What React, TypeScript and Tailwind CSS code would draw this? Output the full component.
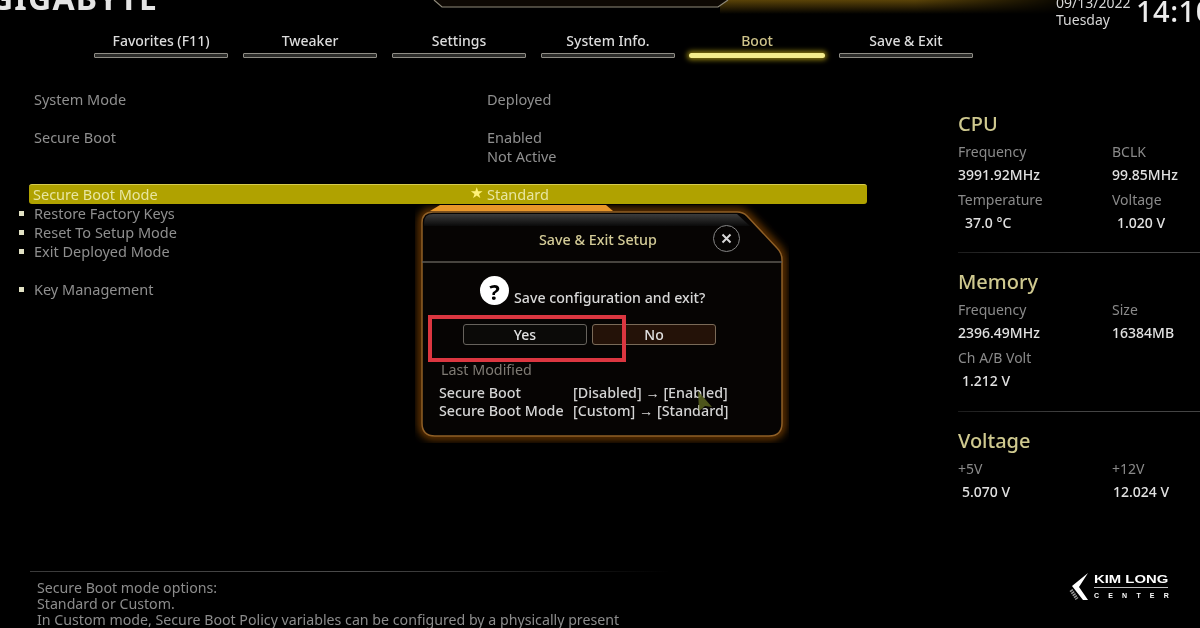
const tabs = ["Favorites (F11)", "Tweaker", "Settings", "System Info.", "Boot", "Save & Exit"];

function Tab({ label }: { label: string }) {
  const active = label === "Boot";
  return (
    <div className="flex w-[134px] flex-col items-center gap-[2px]">
      <span className={`text-[14px] leading-[20px] font-medium ${active ? "text-[#cfc48a]" : "text-[#dcdcdc]"}`}>{label}</span>
      {active ? (
        <div className="h-[5px] w-[136px] rounded-full bg-[#f3ec8c] shadow-[0_0_5px_2px_#8a7a10]" />
      ) : (
        <div className="h-[5px] w-full rounded-[1px] border border-[#8f8d86] bg-[#2c2c2a]" />
      )}
    </div>
  );
}

function Row({ label, value, bullet }: { label: string; value?: string; bullet?: boolean }) {
  return (
    <div className="flex h-[19px] items-center text-[#8f8f8f]">
      <div className="flex w-[34px] justify-start pl-[19px]">
        {bullet && <span className="h-[5px] w-[5px] bg-[#e2e2c4]" />}
      </div>
      <span className="w-[453px]">{label}</span>
      {value && <span>{value}</span>}
    </div>
  );
}

type StatData = { label: string; value: string; pad?: string };

function Stat({ label, value, pad }: StatData) {
  return (
    <div className="flex h-[48px] flex-col">
      <span className="text-[14px] leading-[20px] text-[#8a8a8a]">{label}</span>
      <span className={`mt-[3px] text-[14px] leading-[20px] font-medium text-[#e2e2e2] ${pad ?? ""}`}>{value}</span>
    </div>
  );
}

function Panel({ title, stats, height, gap }: { title: string; stats: StatData[]; height: string; gap?: string }) {
  return (
    <div className={`flex flex-col ${height}`}>
      <span className="text-[20px] leading-[26px] font-medium text-[#cfc98f]">{title}</span>
      <div className="mt-[5px] grid grid-cols-[154px_1fr]">
        {stats.map((s) => (
          <Stat key={s.label + s.value} {...s} />
        ))}
      </div>
      {gap && <div className={`h-px w-full shrink-0 bg-gradient-to-r from-[#1c1c1c] via-[#444444] to-[#444444] ${gap}`} />}
    </div>
  );
}

function Dialog() {
  const outline = "M18 7H322Q328 7 332 11L362 43Q367 48 367 55V218Q367 231 354 231H20Q7 231 7 218V18Q7 7 18 7Z";
  return (
    <div className="absolute top-[205px] left-[415px] h-[238px] w-[374px]">
      <svg className="absolute inset-0 h-full w-full" viewBox="0 0 374 238" fill="none">
        <defs>
          <filter id="glow" x="-10%" y="-10%" width="120%" height="120%">
            <feGaussianBlur stdDeviation="4" />
          </filter>
          <linearGradient id="cap" x1="0" y1="0" x2="0" y2="1">
            <stop offset="0" stopColor="#3c3c3c" />
            <stop offset="1" stopColor="#0a0a0a" />
          </linearGradient>
        </defs>
        <path d={outline} stroke="#a9590c" strokeWidth="5" filter="url(#glow)" />
        <path d="M15 6L25 0H191L198 6Z" fill="#e8962a" />
        <path d={outline} fill="#060403" stroke="#8f5f26" strokeWidth="1.5" />
        <path d="M9 18Q9 9 18 9H322L335 21H9Z" fill="url(#cap)" />
        <path d="M7 57H367" stroke="#5e5a55" strokeWidth="1.5" />
      </svg>
      <div className="relative flex h-full flex-col">
        <div className="flex h-[57px] shrink-0 items-center pt-[13px] pl-[124px]">
          <span className="w-[174px] text-[14.3px] leading-[18px] font-medium text-[#d3cb97]">Save &amp; Exit Setup</span>
          <span className="-mt-[4px] flex h-[27px] w-[27px] items-center justify-center rounded-full border-[1.5px] border-[#858585]">
            <svg width="13" height="13" viewBox="0 0 13 13" stroke="#d8d8d8" strokeWidth="2">
              <path d="M2.5 2.5L10.5 10.5M10.5 2.5L2.5 10.5" />
            </svg>
          </span>
        </div>
        <div className="mt-[15px] flex h-[35px] items-center pl-[65px]">
          <span className="mb-[8px] flex h-[29px] w-[29px] items-center justify-center rounded-full bg-white text-[22px] leading-none font-bold text-black">?</span>
          <span className="mt-[7px] ml-[5px] text-[14.2px] leading-[18px] font-medium text-[#d8d8d8]">Save configuration and exit?</span>
        </div>
        <div className="mt-[12px] flex gap-[5px] pl-[48px]">
          <button className="h-[21px] w-[124px] rounded-[3px] border border-[#66625c] bg-[#0b0a08] text-[14px] leading-[19px] font-medium text-[#e2e2e2]">Yes</button>
          <button className="h-[21px] w-[124px] rounded-[3px] border border-[#7a6a58] bg-[#241208] text-[14px] leading-[19px] font-medium text-[#e2e2e2]">No</button>
        </div>
        <div className="mt-[16px] pl-[26px] text-[14.3px] leading-[18px] text-[#7f7b74]">Last Modified</div>
        <div className="mt-[5px] flex pl-[24px] text-[14.3px] leading-[18px] font-medium text-[#d4d4d4]">
          <div className="w-[134px] whitespace-nowrap">
            <div>Secure Boot</div>
            <div>Secure Boot Mode</div>
          </div>
          <div className="whitespace-nowrap">
            <div>[Disabled] → [Enabled]</div>
            <div>[Custom] → [Standard]</div>
          </div>
        </div>
      </div>
      {/* red annotation box */}
      <div className="absolute top-[110px] left-[13px] h-[47px] w-[198px] border-4 border-[#db3640]" />
      {/* mouse pointer */}
      <svg className="absolute top-[185px] left-[281px]" width="18" height="24" viewBox="0 0 18 24">
        <path d="M2 1L16 17L9 16L3 21Z" fill="#5a6420" opacity="0.85" />
      </svg>
    </div>
  );
}

function Logo() {
  return (
    <div className="absolute top-[573px] left-[1069px] flex items-start gap-[5px] font-['Liberation_Sans',sans-serif] text-white">
      <svg width="20" height="27" viewBox="0 0 20 27" fill="none">
        <path d="M19 0L3 13L14 27H19L10 14Z" fill="#ffffff" />
        <path d="M2 17L8 26" stroke="#9a9a9a" strokeWidth="3.5" strokeDasharray="1.6 0.8" />
      </svg>
      <div className="flex w-[74px] flex-col">
        <span className="origin-left scale-x-[1.29] text-[11.5px] leading-[13px] font-bold whitespace-nowrap">KIM LONG</span>
        <span className="mt-[1px] h-px w-full bg-[#bdbdbd]" />
        <span className="mt-[3px] text-[7px] leading-[9px] font-bold tracking-[9.2px] whitespace-nowrap">CENTER</span>
      </div>
    </div>
  );
}

export default function App() {
  return (
    <div className="relative h-[628px] w-[1200px] overflow-hidden bg-black font-['Noto_Sans',sans-serif]">
      <div className="flex h-full flex-col blur-[0.5px]">
        <div className="relative h-[31px] shrink-0">
          <span className="absolute -top-[18px] -left-[10px] text-[32px] leading-[32px] font-bold tracking-[1.2px] text-[#e4e4e4]">GIGABYTE</span>
          <svg className="absolute top-0 left-[420px] h-[14px] w-[660px]" viewBox="0 0 660 14" fill="none">
            <defs>
              <linearGradient id="gold" x1="0" y1="0" x2="0" y2="1">
                <stop offset="0" stopColor="#5a4308" />
                <stop offset="0.5" stopColor="#2e2204" />
                <stop offset="1" stopColor="#000000" />
              </linearGradient>
              <linearGradient id="fade" x1="0" y1="0" x2="1" y2="0">
                <stop offset="0" stopColor="#ffffff" />
                <stop offset="0.75" stopColor="#ffffff" />
                <stop offset="1" stopColor="#000000" />
              </linearGradient>
              <mask id="fadeMask">
                <rect width="660" height="14" fill="url(#fade)" />
              </mask>
            </defs>
            <rect x="300" width="360" height="14" fill="url(#gold)" mask="url(#fadeMask)" />
            <path d="M14 0L22 7H298L308 0Z" fill="#0d0803" />
            <path d="M14 0L22 7H298L308 0" stroke="#8f8a7a" strokeWidth="1.2" />
          </svg>
          <div className="absolute top-[-6px] left-[1056px] text-[14px] leading-[17px] text-[#d6d6d6]">
            <div>09/13/2022</div>
            <div>Tuesday</div>
          </div>
          <span className="absolute top-[-6px] left-[1136px] text-[29px] leading-[34px] font-medium tracking-[0.5px] whitespace-nowrap text-[#ececec]">14:10</span>
        </div>
        <div className="flex shrink-0 gap-[15px] pl-[94px]">
          {tabs.map((t) => (
            <Tab key={t} label={t} />
          ))}
        </div>
        <div className="flex min-h-0 flex-1">
          <div className="w-[958px] shrink-0 pt-[32px] text-[14.5px] leading-[19px]">
            <Row label="System Mode" value="Deployed" />
            <div className="h-[19px]" />
            <Row label="Secure Boot" value="Enabled" />
            <Row label="" value="Not Active" />
            <div className="h-[18px]" />
            <div className="ml-[29px] flex h-[20px] w-[838px] items-center rounded-[3px] border-t border-[#d6cc50] bg-[#b0a200] pl-[4px] text-[#e8e6a0]">
              <span className="w-[437px]">Secure Boot Mode</span>
              <span className="-mt-[6px] w-[17px] text-[15px] leading-[12px] text-[#fff27a]">★</span>
              <span>Standard</span>
            </div>
            <Row label="Restore Factory Keys" bullet />
            <Row label="Reset To Setup Mode" bullet />
            <Row label="Exit Deployed Mode" bullet />
            <div className="h-[19px]" />
            <Row label="Key Management" bullet />
          </div>
          <div className="flex-1 pt-[53px]">
            <Panel
              title="CPU"
              height="h-[158px]"
              gap="mt-[14px]"
              stats={[
                { label: "Frequency", value: "3991.92MHz" },
                { label: "BCLK", value: "99.85MHz" },
                { label: "Temperature", value: "37.0 °C", pad: "pl-[7px]" },
                { label: "Voltage", value: "1.020 V", pad: "pl-[5px]" },
              ]}
            />
            <Panel
              title="Memory"
              height="h-[159px]"
              gap="mt-[15px]"
              stats={[
                { label: "Frequency", value: "2396.49MHz" },
                { label: "Size", value: "16384MB" },
                { label: "Ch A/B Volt", value: "1.212 V", pad: "pl-[4px]" },
              ]}
            />
            <Panel
              title="Voltage"
              height="h-[90px]"
              stats={[
                { label: "+5V", value: "5.070 V", pad: "pl-[4px]" },
                { label: "+12V", value: "12.024 V", pad: "pl-[1px]" },
              ]}
            />
          </div>
        </div>
        <div className="shrink-0 pl-[37px]">
          <div className="-ml-[7px] h-px w-[640px] bg-gradient-to-r from-[#3a3a3a] via-[#4a4a4a] to-transparent" />
          <div className="h-[56px] pt-[8px] text-[14.2px] leading-[16px] text-[#8c8c8c]">
            <div>Secure Boot mode options:</div>
            <div>Standard or Custom.</div>
            <div className="whitespace-nowrap">In Custom mode, Secure Boot Policy variables can be configured by a physically present</div>
          </div>
        </div>
        <Dialog />
      </div>
      <Logo />
    </div>
  );
}
